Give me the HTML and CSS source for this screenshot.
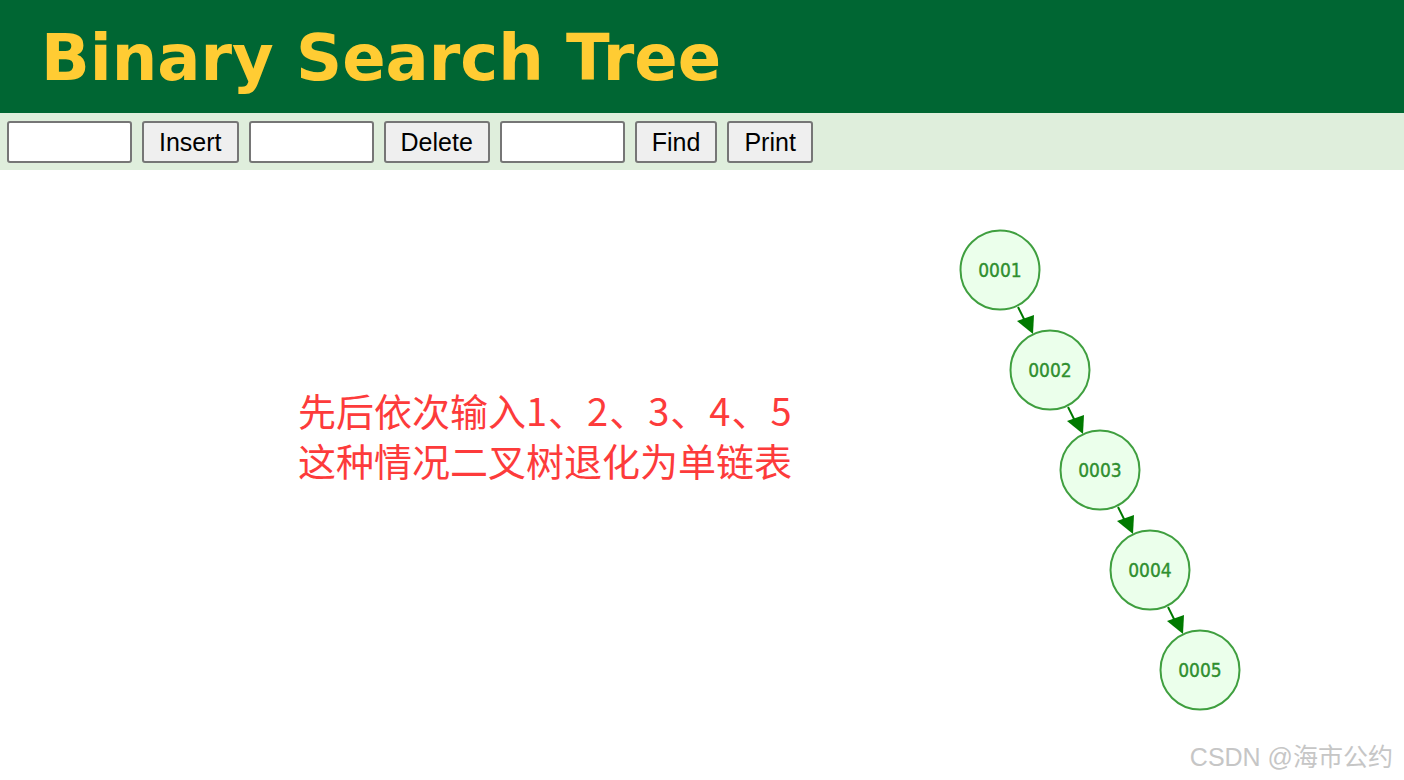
FILE: index.html
```html
<!DOCTYPE html>
<html lang="zh">
<head>
<meta charset="utf-8">
<title>Binary Search Tree</title>
<link rel="stylesheet" href="styles.css">
</head>
<body>
<header class="header">
  <h1 class="title">Binary Search Tree</h1>
</header>
<div class="toolbar">
  <input class="field" type="text">
  <button class="btn">Insert</button>
  <input class="field" type="text">
  <button class="btn">Delete</button>
  <input class="field" type="text">
  <button class="btn">Find</button>
  <button class="btn">Print</button>
</div>
<main class="canvas">
  <p class="note">先后依次输入<span class="nums">1、2、3、4、5</span><br>这种情况二叉树退化为单链表</p>
  <svg class="tree" viewBox="940 220 320 520" width="320" height="520">
    <g class="edges">
      <line x1="1018" y1="307" x2="1025" y2="321"/>
      <path d="M1017,321 L1034,315 L1033,334 z" class="head"/>
      <line x1="1068" y1="407" x2="1075" y2="421"/>
      <path d="M1067,421 L1084,415 L1083,434 z" class="head"/>
      <line x1="1118" y1="507" x2="1125" y2="521"/>
      <path d="M1117,521 L1134,515 L1133,534 z" class="head"/>
      <line x1="1168" y1="607" x2="1175" y2="621"/>
      <path d="M1167,621 L1184,615 L1183,634 z" class="head"/>
    </g>
    <g class="node"><circle cx="1000" cy="270" r="39.5"/><text x="1000" y="277">0001</text></g>
    <g class="node"><circle cx="1050" cy="370" r="39.5"/><text x="1050" y="377">0002</text></g>
    <g class="node"><circle cx="1100" cy="470" r="39.5"/><text x="1100" y="477">0003</text></g>
    <g class="node"><circle cx="1150" cy="570" r="39.5"/><text x="1150" y="577">0004</text></g>
    <g class="node"><circle cx="1200" cy="670" r="39.5"/><text x="1200" y="677">0005</text></g>
  </svg>
  <div class="watermark">CSDN @海市公约</div>
</main>
</body>
</html>
```
FILE: styles.css
```css
html, body {
  margin: 0;
  padding: 0;
  background: #ffffff;
}
body {
  width: 1404px;
  height: 780px;
  overflow: hidden;
  font-family: "Liberation Sans", Arial, sans-serif;
}
.header {
  height: 113px;
  background: #006633;
  display: flex;
  align-items: center;
}
.title {
  margin: 0 0 0 41px;
  font-family: "DejaVu Sans", Verdana, sans-serif;
  font-weight: bold;
  font-size: 64px;
  letter-spacing: 0;
  color: #ffcc33;
  line-height: 1;
  position: relative;
  top: 1px;
}
.toolbar {
  height: 57px;
  box-sizing: border-box;
  background: #dfeedc;
  display: flex;
  align-items: flex-start;
  gap: 10px;
  padding: 8px 0 0 7px;
}
.field {
  width: 125px;
  height: 42px;
  box-sizing: border-box;
  border: 2px solid #767676;
  border-radius: 3px;
  background: #fff;
  margin: 0;
  padding: 0 4px;
  font: 24px "Liberation Sans", Arial, sans-serif;
}
.btn {
  height: 42px;
  box-sizing: border-box;
  border: 2px solid #767676;
  border-radius: 3px;
  background: #efefef;
  color: #000;
  margin: 0;
  padding: 0 15px;
  font: 25px "Liberation Sans", Arial, sans-serif;
}
.canvas {
  position: relative;
  height: 610px;
}
.note {
  margin: 0;
  padding: 215px 0 0 298px;
  font-family: "Noto Sans CJK SC", "Microsoft YaHei", sans-serif;
  font-size: 38px;
  line-height: 50px;
  color: #fd3b3b;
}
.nums {
  letter-spacing: 1px;
}
.tree {
  position: absolute;
  left: 940px;
  top: 50px;
}
.edges line {
  stroke: #007a00;
  stroke-width: 2;
}
.edges .head {
  fill: #007a00;
}
.node circle {
  fill: #ebffeb;
  stroke: #3f9f3f;
  stroke-width: 2;
}
.node text {
  font-family: "DejaVu Sans Condensed", "DejaVu Sans", sans-serif;
  font-size: 19px;
  fill: #2f8f2f;
  stroke: #2f8f2f;
  stroke-width: 0.35;
  text-anchor: middle;
}
.watermark {
  position: absolute;
  right: 11px;
  bottom: 10px;
  font-family: "Liberation Sans", "Noto Sans CJK SC", sans-serif;
  font-size: 25px;
  color: #c6c6c6;
  line-height: 1;
}
```
